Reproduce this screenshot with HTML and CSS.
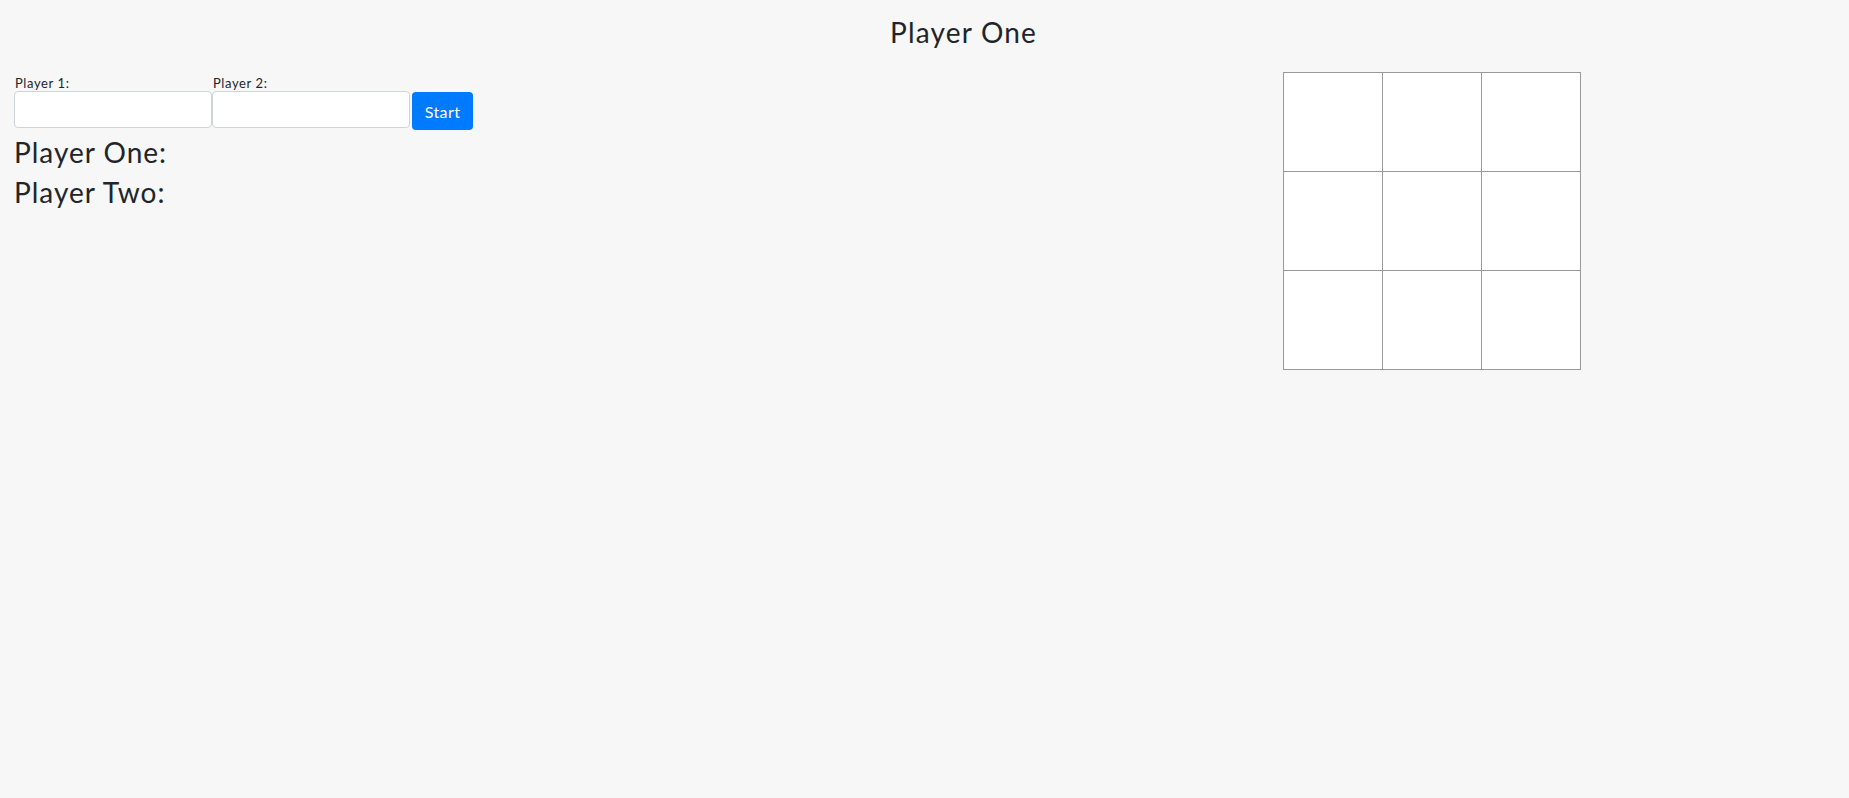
FILE: index.html
```html
<!DOCTYPE html>
<html lang="en">
<head>
<meta charset="utf-8">
<title>Tic Tac Toe</title>
<link rel="stylesheet" href="styles.css">
</head>
<body>
<h1 class="turn">Player One</h1>
<main class="main">
  <section class="side">
    <form class="players">
      <div class="field">
        <label class="field-label" for="p1">Player 1:</label>
        <input class="field-input" id="p1" type="text">
      </div>
      <div class="field">
        <label class="field-label" for="p2">Player 2:</label>
        <input class="field-input" id="p2" type="text">
      </div>
      <button class="start" type="button">Start</button>
    </form>
    <h3 class="score">Player One:</h3>
    <h3 class="score">Player Two:</h3>
  </section>
  <div class="board">
    <div class="cell"></div><div class="cell"></div><div class="cell"></div>
    <div class="cell"></div><div class="cell"></div><div class="cell"></div>
    <div class="cell"></div><div class="cell"></div><div class="cell"></div>
  </div>
</main>
</body>
</html>
```

FILE: styles.css
```css
html, body {
  margin: 0;
  padding: 0;
}
body {
  background: #f7f7f7;
  color: #212529;
  font-family: Lato, "Liberation Sans", sans-serif;
}
.turn {
  margin: 0;
  padding: 15px 0 0 78px;
  font-size: 28px;
  font-weight: 400;
  line-height: 34px;
  letter-spacing: 1.2px;
  text-align: center;
}
.main {
  display: flex;
  align-items: flex-start;
  margin-top: 23px;
  padding: 0 268px 0 14px;
}
.side {
  flex: 1;
  padding-top: 4px;
}
.players {
  display: flex;
  align-items: flex-start;
  margin-bottom: 5px;
}
.field {
  display: flex;
  flex-direction: column;
  width: 198px;
}
.field-label {
  font-size: 13px;
  line-height: 15px;
  letter-spacing: 0.6px;
  padding-left: 1px;
}
.field-input {
  box-sizing: border-box;
  height: 37px;
  width: 100%;
  margin: 0;
  background: #fff;
  border: 1px solid #ced4da;
  border-radius: 4px;
  font: inherit;
}
.start {
  box-sizing: border-box;
  margin: 16px 0 0 2px;
  height: 38px;
  width: 61px;
  border: none;
  border-radius: 4px;
  background: #007bff;
  color: #fff;
  font-family: inherit;
  font-size: 16px;
  letter-spacing: 0.4px;
  padding: 0;
}
.score {
  margin: 0 0 6px;
  font-size: 28px;
  font-weight: 400;
  line-height: 34px;
  letter-spacing: 1px;
}
.board {
  display: grid;
  grid-template-columns: repeat(3, 98px);
  grid-template-rows: repeat(3, 98px);
  gap: 1px;
  background: #999;
  border: 1px solid #999;
  flex: none;
}
.cell {
  background: #fff;
}
```
